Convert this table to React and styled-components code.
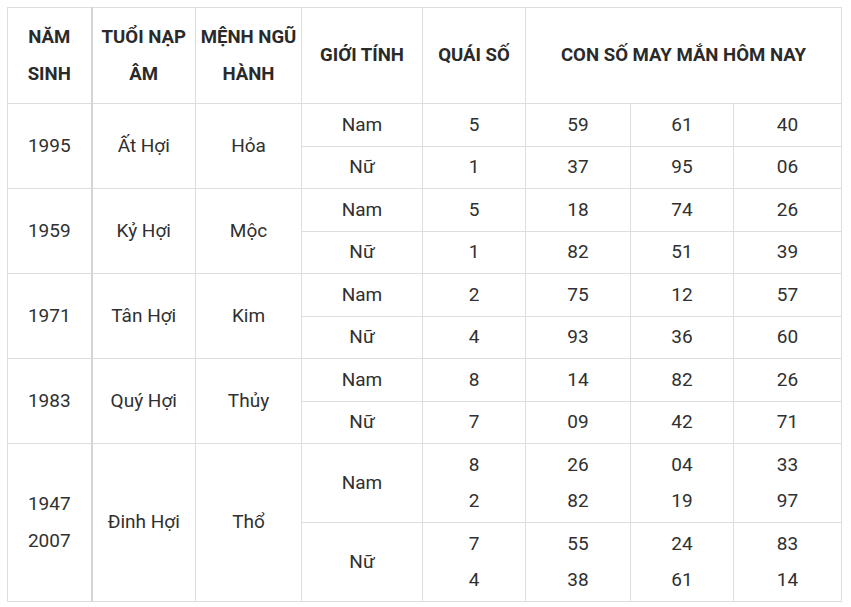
import styled, { createGlobalStyle } from 'styled-components';

const GlobalStyle = createGlobalStyle`
  body {
    margin: 0;
    background: #fff;
    font-family: Roboto, "Liberation Sans", Arial, sans-serif;
    color: #333;
  }
`;

const Page = styled.div`
  padding: 7px;
`;

const Table = styled.table`
  border-collapse: collapse;
  table-layout: fixed;
  width: 834px;
  border: 1px solid #dedede;
`;

const HeadCell = styled.th`
  border: 1px solid #dedede;
  border-right: ${({ $first }) => ($first ? '2px solid #d4d4d4' : '1px solid #dedede')};
  padding: 11px 3px;
  font-size: 18.6px;
  line-height: 36.5px;
  font-weight: 700;
  color: #2a2a2a;
  text-align: center;
  vertical-align: middle;
`;

const Cell = styled.td`
  border: 1px solid #dedede;
  border-right: ${({ $first }) => ($first ? '2px solid #d4d4d4' : '1px solid #dedede')};
  padding: 2.5px 4px;
  font-size: 19px;
  line-height: 36.5px;
  font-weight: 400;
  color: #303030;
  text-align: center;
  vertical-align: middle;
`;

const widths = [84, 104, 106, 121, 103, 105, 103, 108];

const groups = [
  { year: ['1995'], tuoi: 'Ất Hợi', menh: 'Hỏa', rows: [
    { gt: 'Nam', qs: ['5'], nums: [['59'], ['61'], ['40']] },
    { gt: 'Nữ', qs: ['1'], nums: [['37'], ['95'], ['06']] },
  ] },
  { year: ['1959'], tuoi: 'Kỷ Hợi', menh: 'Mộc', rows: [
    { gt: 'Nam', qs: ['5'], nums: [['18'], ['74'], ['26']] },
    { gt: 'Nữ', qs: ['1'], nums: [['82'], ['51'], ['39']] },
  ] },
  { year: ['1971'], tuoi: 'Tân Hợi', menh: 'Kim', rows: [
    { gt: 'Nam', qs: ['2'], nums: [['75'], ['12'], ['57']] },
    { gt: 'Nữ', qs: ['4'], nums: [['93'], ['36'], ['60']] },
  ] },
  { year: ['1983'], tuoi: 'Quý Hợi', menh: 'Thủy', rows: [
    { gt: 'Nam', qs: ['8'], nums: [['14'], ['82'], ['26']] },
    { gt: 'Nữ', qs: ['7'], nums: [['09'], ['42'], ['71']] },
  ] },
  { year: ['1947', '2007'], tuoi: 'Đinh Hợi', menh: 'Thổ', rows: [
    { gt: 'Nam', qs: ['8', '2'], nums: [['26', '82'], ['04', '19'], ['33', '97']] },
    { gt: 'Nữ', qs: ['7', '4'], nums: [['55', '38'], ['24', '61'], ['83', '14']] },
  ] },
];

const Lines = ({ items }) =>
  items.map((t, i) => (
    <span key={i}>
      {i > 0 && <br />}
      {t}
    </span>
  ));

export default function App() {
  return (
    <Page>
      <GlobalStyle />
      <Table>
        <colgroup>
          {widths.map((w, i) => (
            <col key={i} style={{ width: w }} />
          ))}
        </colgroup>
        <thead>
          <tr>
            <HeadCell $first>NĂM SINH</HeadCell>
            <HeadCell>TUỔI NẠP ÂM</HeadCell>
            <HeadCell>MỆNH NGŨ HÀNH</HeadCell>
            <HeadCell>GIỚI TÍNH</HeadCell>
            <HeadCell>QUÁI SỐ</HeadCell>
            <HeadCell colSpan={3}>CON SỐ MAY MẮN HÔM NAY</HeadCell>
          </tr>
        </thead>
        <tbody>
          {groups.map((g) =>
            g.rows.map((r, ri) => (
              <tr key={g.tuoi + ri}>
                {ri === 0 && (
                  <>
                    <Cell $first rowSpan={g.rows.length}>
                      <Lines items={g.year} />
                    </Cell>
                    <Cell rowSpan={g.rows.length}>{g.tuoi}</Cell>
                    <Cell rowSpan={g.rows.length}>{g.menh}</Cell>
                  </>
                )}
                <Cell>{r.gt}</Cell>
                <Cell>
                  <Lines items={r.qs} />
                </Cell>
                {r.nums.map((n, ni) => (
                  <Cell key={ni}>
                    <Lines items={n} />
                  </Cell>
                ))}
              </tr>
            ))
          )}
        </tbody>
      </Table>
    </Page>
  );
}
